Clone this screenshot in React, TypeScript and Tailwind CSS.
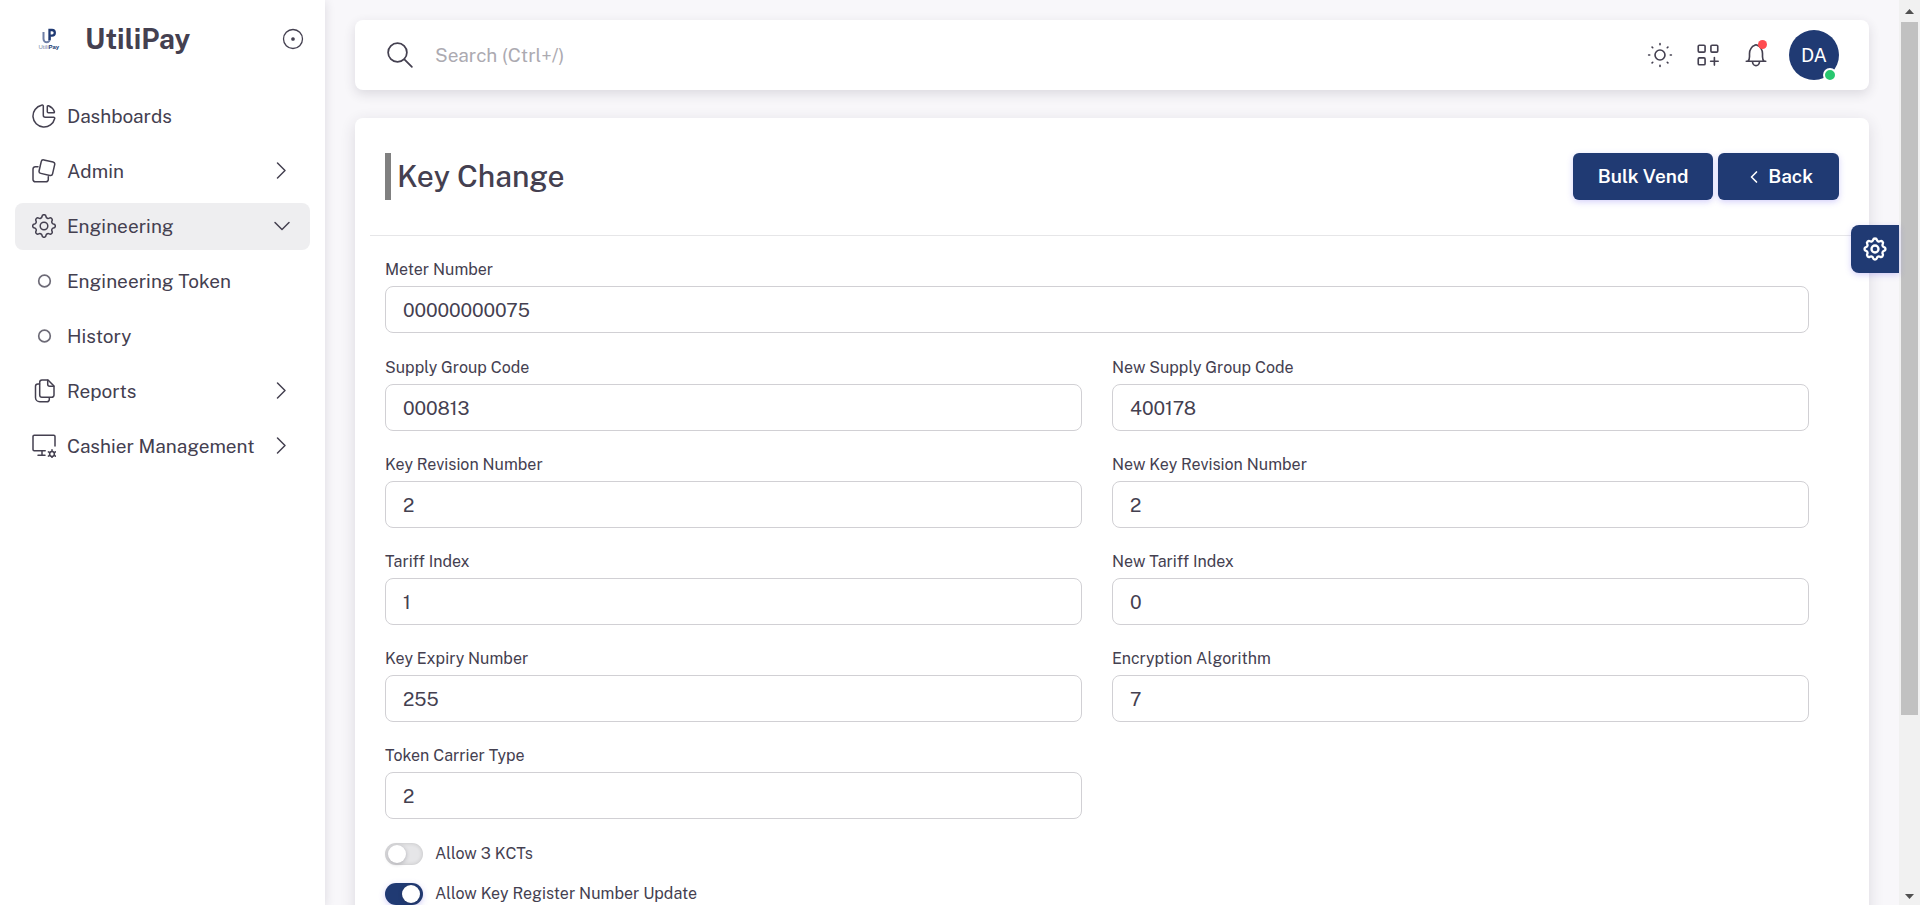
import { useState } from "react";
import type { ReactNode } from "react";
import { TbSettings, TbChevronLeft } from "react-icons/tb";

function Stroke({ className, children, width = 1.5 }: { className?: string; children: ReactNode; width?: number }) {
  return (
    <svg viewBox="0 0 24 24" fill="none" stroke="currentColor" strokeWidth={width} strokeLinecap="round" strokeLinejoin="round" className={className} aria-hidden="true">
      {children}
    </svg>
  );
}

function PieIcon() {
  return (
    <Stroke className="size-6">
      <path d="M9.500 1.300a11 11 0 1 0 13.200 13.200a1 1 0 0 0 -1 -1.300h-8.400a2 2 0 0 1 -2 -2v-8.900a1.100 1.100 0 0 0 -1.800 -1z" />
      <path d="M15.300 2.600a.9 .9 0 0 1 1.200 -.9a10.500 10.500 0 0 1 5.900 5.900a.9 .9 0 0 1 -.9 1.200h-5.200a1 1 0 0 1 -1 -1z" />
    </Stroke>
  );
}

function CardsIcon() {
  return (
    <Stroke className="size-6">
      <rect x="8" y="1.800" width="13.800" height="13.800" rx="2.200" transform="rotate(13 14.900 8.700)" />
      <path d="M6 7.700h-2.700a2.300 2.300 0 0 0 -2.300 2.300v10.500a2.300 2.300 0 0 0 2.300 2.300h10.700a2.300 2.300 0 0 0 2.300 -2.300v-2.800" />
    </Stroke>
  );
}

function CogIcon() {
  return (
    <Stroke className="size-6">
      <circle cx="12" cy="12" r="3.800" />
      <path d="M10 2.700a2 2 0 0 1 4 0a2.300 2.300 0 0 0 3.300 1.400a2 2 0 0 1 2.700 2.700a2.300 2.300 0 0 0 1.300 3.200a2 2 0 0 1 0 4a2.300 2.300 0 0 0 -1.300 3.200a2 2 0 0 1 -2.700 2.700a2.300 2.300 0 0 0 -3.300 1.400a2 2 0 0 1 -4 0a2.300 2.300 0 0 0 -3.300 -1.400a2 2 0 0 1 -2.700 -2.700a2.300 2.300 0 0 0 -1.300 -3.200a2 2 0 0 1 0 -4a2.300 2.300 0 0 0 1.300 -3.200a2 2 0 0 1 2.700 -2.700a2.300 2.300 0 0 0 3.300 -1.400z" />
    </Stroke>
  );
}

function FilesIcon() {
  return (
    <Stroke className="size-6">
      <path d="M10 1h6l6 6v9a2.300 2.300 0 0 1 -2.300 2.300h-9.700a2.300 2.300 0 0 1 -2.300 -2.300v-12.700a2.300 2.300 0 0 1 2.300 -2.300z" />
      <path d="M15.700 1.300v4a2 2 0 0 0 2 2h4" />
      <path d="M7.500 5h-1.700a2.300 2.300 0 0 0 -2.300 2.300v11.200a4.300 4.300 0 0 0 4.300 4.300h7.200a2.300 2.300 0 0 0 2.300 -2.300v-1.800" />
    </Stroke>
  );
}

function MonitorIcon() {
  return (
    <Stroke className="size-6">
      <path d="M23 12v-9.500a1.200 1.200 0 0 0 -1.200 -1.200h-19.600a1.200 1.200 0 0 0 -1.200 1.200v13a1.200 1.200 0 0 0 1.200 1.200h11" />
      <path d="M10 17v4.300M6 21.300h7" />
      <circle cx="20" cy="20" r="2.400" />
      <path d="M20 15.800v1.500M20 22.700v1.100M16.400 17.900l1.300 .8M22.300 21.300l1.200 .8M16.400 22.100l1.300 -.8M22.300 18.700l1.200 -.8" />
    </Stroke>
  );
}

function DotIcon() {
  return (
    <Stroke className="size-6 text-[#6d6b77]" width={1.700}>
      <circle cx="12.500" cy="12" r="5.800" />
    </Stroke>
  );
}

type Item = { label: string; icon: ReactNode; arrow?: "right" | "down"; active?: boolean };

const items: Item[] = [
  { label: "Dashboards", icon: <PieIcon /> },
  { label: "Admin", icon: <CardsIcon />, arrow: "right" },
  { label: "Engineering", icon: <CogIcon />, arrow: "down", active: true },
  { label: "Engineering Token", icon: <DotIcon /> },
  { label: "History", icon: <DotIcon /> },
  { label: "Reports", icon: <FilesIcon />, arrow: "right" },
  { label: "Cashier Management", icon: <MonitorIcon />, arrow: "right" },
];

function Sidebar() {
  return (
    <aside className="z-10 flex w-[325px] shrink-0 flex-col bg-white shadow-[0_2px_10px_rgba(47,43,61,0.14)]">
      <div className="flex h-[78px] items-center pr-5 pl-[38px]">
        <svg viewBox="0 0 22 24" className="h-6 w-[22px]" aria-hidden="true">
          <path d="M5.500 5v7a3.200 3.200 0 0 0 6.400 0v-2" fill="none" stroke="#6f7fa5" strokeWidth="2" />
          <path d="M11.500 13V3h2.500a2.800 2.800 0 0 1 0 5.600H11.500" fill="none" stroke="#203a73" strokeWidth="2.300" />
          <text x="0.500" y="21.500" fontSize="6" fontFamily="Liberation Sans, sans-serif" fill="#7a86a5">Utili<tspan fill="#203a73" fontWeight="700">Pay</tspan></text>
        </svg>
        <span className="ml-[25px] flex-1 text-[28px] leading-9 font-bold">UtiliPay</span>
        <button type="button" aria-label="Pin menu">
          <Stroke className="size-6" width={1.3}>
            <circle cx="12" cy="12" r="9.500" />
            <circle cx="12" cy="12" r="1.200" fill="currentColor" />
          </Stroke>
        </button>
      </div>
      <nav className="flex flex-col gap-2 px-[15px] pt-[15px]">
        {items.map((it) => (
          <a key={it.label} href="#" className={`flex h-[47px] items-center rounded-lg pr-4 pb-0.5 pl-[17px] text-[19px] leading-7 ${it.active ? "bg-[#eeeef0]" : ""}`}>
            {it.icon}
            <span className="ml-[11px] flex-1">{it.label}</span>
            {it.arrow && (
              <Stroke className="size-6" width={1.5}>
                {it.arrow === "right" ? <path d="M7.500 4l7.500 7.500l-7.500 7.500" /> : <path d="M5 8.500l7 7l7 -7" />}
              </Stroke>
            )}
          </a>
        ))}
      </nav>
    </aside>
  );
}

function Topbar() {
  return (
    <header className="flex h-[70px] shrink-0 items-center rounded-lg bg-white px-[30px] shadow-[0_4px_12px_rgba(47,43,61,0.14)]">
      <Stroke className="size-[30px]" width={1.4}>
        <circle cx="10" cy="10" r="7.500" />
        <path d="M15.500 15.500l6 6" />
      </Stroke>
      <input aria-label="Search" placeholder="Search (Ctrl+/)" className="ml-5 min-w-0 flex-1 bg-transparent text-[19px] leading-7 outline-none placeholder:text-[#acaab1]" />
      <div className="flex items-center gap-5">
        <div className="flex items-center gap-[22px]">
          <button type="button" aria-label="Theme">
            <Stroke className="size-[26px]">
              <circle cx="12" cy="12" r="4.600" />
              <path d="M12 1.500v1M12 21.500v1M1.500 12h1M21.500 12h1M4.700 4.700l.6 .6M18.700 18.700l.6 .6M4.700 19.300l.6 -.6M18.700 5.300l.6 -.6" />
            </Stroke>
          </button>
          <button type="button" aria-label="Shortcuts">
            <Stroke className="size-[26px]">
              <rect x="3" y="3" width="6.300" height="6.300" rx="1" />
              <rect x="14.700" y="3" width="6.300" height="6.300" rx="1" />
              <rect x="3" y="14.700" width="6.300" height="6.300" rx="1" />
              <path d="M17.900 14.300v7M14.400 17.800h7" />
            </Stroke>
          </button>
          <button type="button" aria-label="Notifications" className="relative">
            <Stroke className="size-[26px]">
              <path d="M3 17.800h18M4.600 17.600c1 -1 1.400 -2.200 1.400 -4v-3.100c0 -3.500 2.300 -6.500 4.500 -7.200a2 2 0 0 1 3 0c2.200 .7 4.500 3.700 4.500 7.200v3.100c0 1.800 .4 3 1.400 4" />
              <path d="M8.800 18.200a3.200 3.600 0 0 0 6.400 0" />
            </Stroke>
            <span className="absolute -top-0.5 right-0.5 size-[9px] rounded-full bg-[#ff4c51]" />
          </button>
        </div>
        <button type="button" aria-label="Account" className="relative flex size-[50px] items-center justify-center rounded-full bg-[#203a73] text-[19px] text-white">
          DA
          <span className="absolute right-[2px] bottom-[-2px] size-[14px] rounded-full border-2 border-white bg-[#28c76f]" />
        </button>
      </div>
    </header>
  );
}

function Field({ id, label, value }: { id: string; label: string; value: string }) {
  return (
    <div className="flex flex-col gap-1.5">
      <label htmlFor={id} className="text-[16px] leading-5">{label}</label>
      <input id={id} defaultValue={value} className="h-[47px] w-full rounded-lg border border-[#d1d0d4] bg-white px-[17px] text-[19px] outline-none" />
    </div>
  );
}

function Toggle({ id, label, initial }: { id: string; label: string; initial: boolean }) {
  const [on, setOn] = useState(initial);
  return (
    <div className="flex h-6 items-center gap-3">
      <input id={id} type="checkbox" role="switch" checked={on} onChange={() => setOn(!on)} className="relative h-[22px] w-[38px] appearance-none rounded-full bg-[#e6e6e8] shadow-[inset_0_0_4px_rgba(0,0,0,0.16)] before:absolute before:top-0.5 before:left-[3px] before:size-[18px] before:rounded-full before:bg-white before:shadow-[0_1px_4px_rgba(47,43,61,0.3)] checked:bg-[#203a73] checked:shadow-[0_2px_6px_rgba(115,103,240,0.3)] checked:before:left-[17px]" />
      <label htmlFor={id} className="text-[16px] leading-5">{label}</label>
    </div>
  );
}

const fields = [
  ["Supply Group Code", "000813"],
  ["New Supply Group Code", "400178"],
  ["Key Revision Number", "2"],
  ["New Key Revision Number", "2"],
  ["Tariff Index", "1"],
  ["New Tariff Index", "0"],
  ["Key Expiry Number", "255"],
  ["Encryption Algorithm", "7"],
  ["Token Carrier Type", "2"],
];

export default function App() {
  const button = "flex h-[47px] items-center rounded-md bg-[#203a73] text-[19px] font-semibold text-white shadow-[0_2px_6px_rgba(115,103,240,0.3)]";
  return (
    <div className="flex h-screen overflow-hidden bg-[#f8f7fa] font-['Public_Sans','Inter',sans-serif] text-[#444050]">
      <Sidebar />
      <main className="flex min-w-0 flex-1 flex-col gap-7 overflow-y-auto px-[30px] py-5 [scrollbar-width:none]">
        <Topbar />
        <section className="shrink-0 rounded-lg bg-white px-[15px] pb-10 shadow-[0_4px_15px_rgba(47,43,61,0.14)]">
          <div className="flex items-center justify-between border-b border-[#e6e6e8] px-[15px] py-[35px]">
            <h1 className="h-[47px] border-l-6 border-[#808080] pl-1.5 text-[30px] leading-[47px] font-medium">Key Change</h1>
            <div className="flex gap-[5px]">
              <button type="button" className={`${button} px-[25px]`}>Bulk Vend</button>
              <button type="button" className={`${button} gap-1 px-[26px]`}><TbChevronLeft className="size-5" />Back</button>
            </div>
          </div>
          <form className="flex flex-col pt-6 pr-[45px] pl-[15px]">
            <Field id="meter" label="Meter Number" value="00000000075" />
            <div className="mt-[25px] grid grid-cols-2 gap-x-[30px] gap-y-6">
              {fields.map(([label, value]) => (
                <Field key={label} id={label.toLowerCase().replaceAll(" ", "-")} label={label} value={value} />
              ))}
            </div>
            <div className="mt-[23px] flex flex-col gap-4">
              <Toggle id="kcts" label="Allow 3 KCTs" initial={false} />
              <Toggle id="register" label="Allow Key Register Number Update" initial={true} />
            </div>
          </form>
        </section>
      </main>
      <div className="flex w-[21px] shrink-0 flex-col items-center bg-[#f1f1f1]" aria-hidden="true">
        <svg viewBox="0 0 21 22" className="h-[22px] w-[21px]"><path d="M6 14L10.500 9L15 14z" fill="#505050" /></svg>
        <div className="flex w-[17px] flex-1 flex-col"><div className="h-[80.5%] bg-[#c1c1c1]" /></div>
        <svg viewBox="0 0 21 22" className="h-[22px] w-[21px]"><path d="M6 11L10.500 16L15 11z" fill="#505050" /></svg>
      </div>
      <button type="button" aria-label="Customize" className="fixed top-[225px] right-[21px] z-20 flex size-12 items-center justify-center rounded-l-lg bg-[#203a73] text-white shadow-[0_2px_6px_rgba(115,103,240,0.3)]">
        <TbSettings className="size-7" />
      </button>
    </div>
  );
}
